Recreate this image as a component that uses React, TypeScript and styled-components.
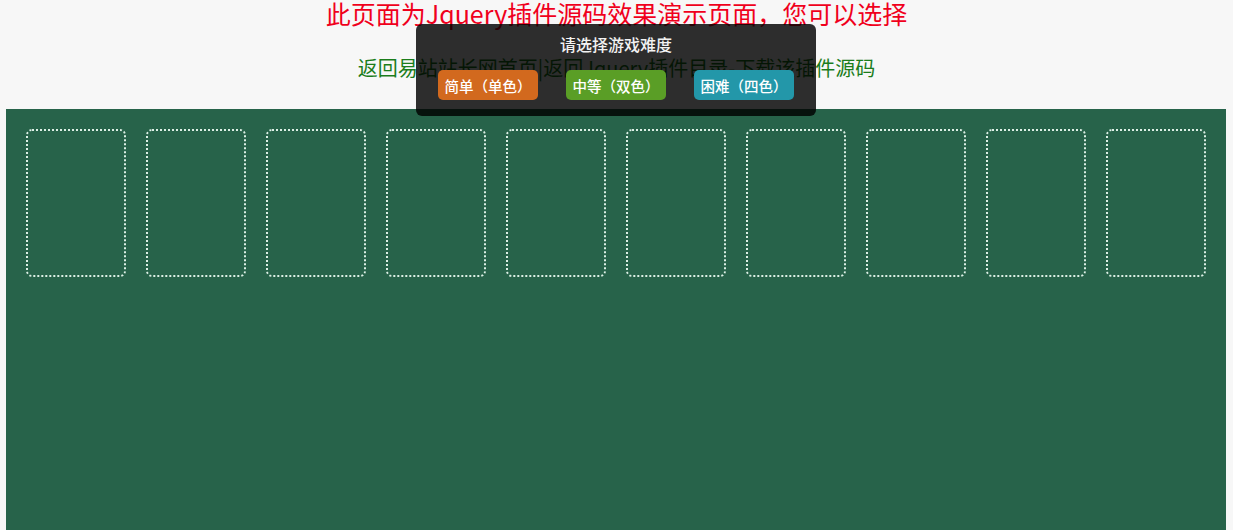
import React from 'react';
import styled, { createGlobalStyle } from 'styled-components';

/* ---------- Global ---------- */
const GlobalStyle = createGlobalStyle`
  html, body {
    margin: 0;
    padding: 0;
    background: #f7f7f7;
    font-family: 'Microsoft YaHei', 'Noto Sans CJK SC', 'Noto Sans', sans-serif;
    overflow: hidden;
  }
`;

/* ---------- Styled Components ---------- */
const Page = styled.div`
  position: relative;
  min-height: 530px;
`;

const Notice = styled.div`
  text-align: center;
  color: #f0001c;
  font-size: 25px;
  line-height: 26px;
`;

const Links = styled.div`
  text-align: center;
  color: #1b7d1b;
  font-size: 20px;
  line-height: 28px;
  margin-top: 28px;
`;

const Table = styled.div`
  width: 1220px;
  margin: 27px 0 0 6px;
  min-height: 430px;
  background: #27634a;
  padding: 20px;
  box-sizing: border-box;
  display: flex;
  gap: 20px;
  align-items: flex-start;
`;

const Slot = styled.div`
  width: 100px;
  height: 148px;
  box-sizing: border-box;
  border: 2px dotted #dcefe5;
  border-radius: 6px;
`;

const Dialog = styled.div`
  position: absolute;
  top: 24px;
  left: 416px;
  width: 400px;
  height: 92px;
  box-sizing: border-box;
  background: rgba(0, 0, 0, 0.82);
  border-radius: 6px;
  padding: 10px 22px 0;
`;

const DialogTitle = styled.div`
  text-align: center;
  color: #f2f2f2;
  font-size: 16px;
  font-weight: 500;
  line-height: 20px;
`;

const Buttons = styled.div`
  display: flex;
  justify-content: space-between;
  margin-top: 16px;
`;

const LevelButton = styled.button<{ $bg: string }>`
  width: 100px;
  height: 30px;
  border: none;
  border-radius: 5px;
  background: ${(p) => p.$bg};
  color: #fff;
  font-family: inherit;
  font-size: 14.5px;
  font-weight: 500;
  padding: 0;
  cursor: pointer;
`;

/* ---------- Main Component ---------- */
const levels = [
  { label: '简单（单色）', color: '#d2691e' },
  { label: '中等（双色）', color: '#5a9e26' },
  { label: '困难（四色）', color: '#2397a9' },
];

function App() {
  return (
    <>
      <GlobalStyle />
      <Page>
        <Notice>此页面为Jquery插件源码效果演示页面，您可以选择</Notice>
        <Links>返回易站站长网首页|返回Jquery插件目录-下载该插件源码</Links>
        <Table>
          {Array.from({ length: 10 }).map((_, i) => (
            <Slot key={i} />
          ))}
        </Table>
        <Dialog>
          <DialogTitle>请选择游戏难度</DialogTitle>
          <Buttons>
            {levels.map((l) => (
              <LevelButton key={l.label} $bg={l.color}>
                {l.label}
              </LevelButton>
            ))}
          </Buttons>
        </Dialog>
      </Page>
    </>
  );
}

export default App;
